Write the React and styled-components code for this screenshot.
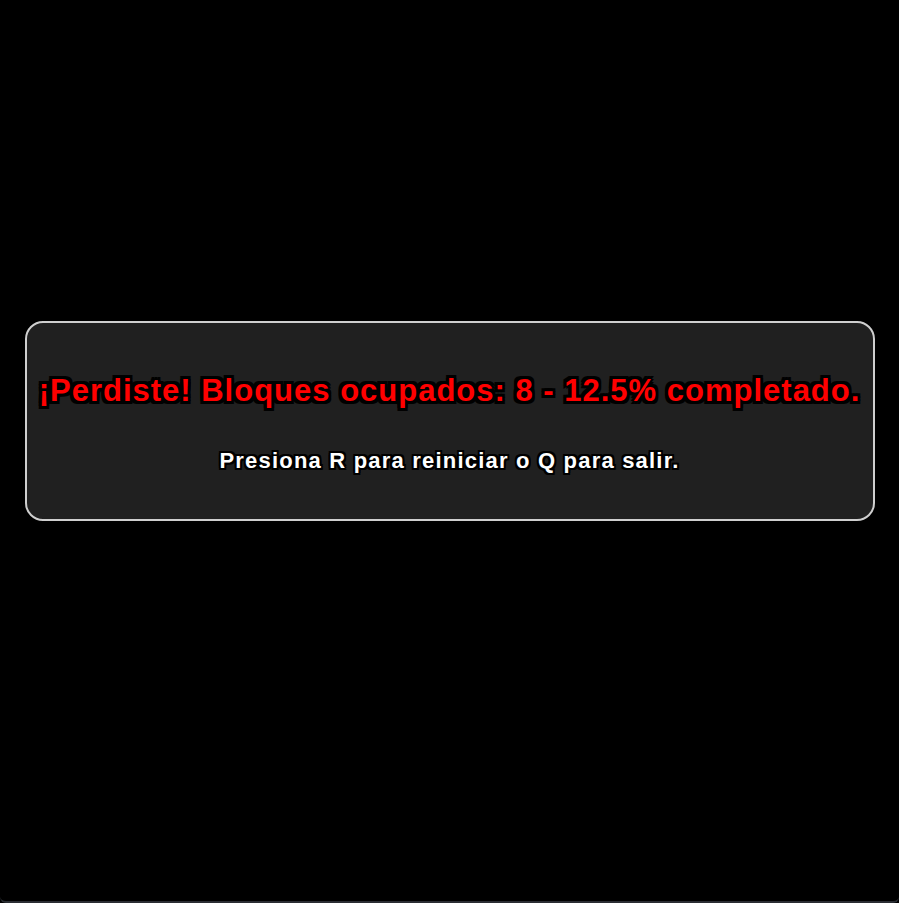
import React from 'react'
import styled, { createGlobalStyle } from 'styled-components'

const Global = createGlobalStyle`
  html, body {
    margin: 0;
    padding: 0;
    background: #000;
  }
`

const Screen = styled.div`
  box-sizing: border-box;
  height: 903px;
  background: #000;
  border-bottom: 2px solid #2a2d33;
  border-radius: 0 0 6px 6px;
  padding-top: 321px;
  display: flex;
  justify-content: center;
  font-family: 'Liberation Sans', Arial, sans-serif;
`

const Panel = styled.div`
  box-sizing: border-box;
  width: 850px;
  height: 200px;
  background: #202020;
  border: 2px solid #cfcfcf;
  border-radius: 18px;
  display: flex;
  flex-direction: column;
  align-items: center;
  padding-top: 52px;
  gap: 44px;
`

const outline = (w) => `
  ${w}px 0 0 #000, -${w}px 0 0 #000, 0 ${w}px 0 #000, 0 -${w}px 0 #000,
  ${w}px ${w}px 0 #000, -${w}px ${w}px 0 #000, ${w}px -${w}px 0 #000, -${w}px -${w}px 0 #000
`

const Message = styled.div`
  color: ${p => p.color};
  font-size: ${p => p.size}px;
  letter-spacing: ${p => p.spacing}px;
  font-weight: bold;
  line-height: 1;
  white-space: nowrap;
  text-shadow: ${p => outline(p.stroke)};
`

export default function App() {
  return (
    <>
      <Global />
      <Screen>
        <Panel>
          <Message color="#ff0000" size={31} spacing={1} stroke={3}>
            ¡Perdiste! Bloques ocupados: 8 - 12.5% completado.
          </Message>
          <Message color="#ffffff" size={22} spacing={1.2} stroke={2}>
            Presiona R para reiniciar o Q para salir.
          </Message>
        </Panel>
      </Screen>
    </>
  )
}
